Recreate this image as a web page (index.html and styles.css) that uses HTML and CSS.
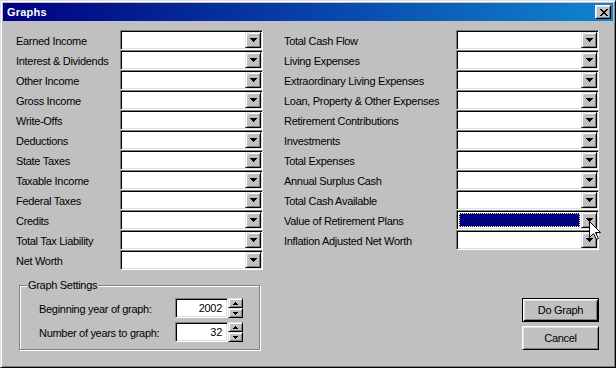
FILE: index.html
```html
<!DOCTYPE html>
<html>
<head>
<meta charset="utf-8">
<title>Graphs</title>
<link rel="stylesheet" href="styles.css">
</head>
<body>
<div class="window">
  <div class="titlebar">
    <span class="title">Graphs</span>
    <div class="close"><svg width="8" height="7" viewBox="0 0 8 7"><path d="M0 0h2v1h-2z M6 0h2v1h-2z M1 1h2v1h-2z M5 1h2v1h-2z M2 2h4v1h-4z M3 3h2v1h-2z M2 4h4v1h-4z M1 5h2v1h-2z M5 5h2v1h-2z M0 6h2v1h-2z M6 6h2v1h-2z" fill="#000"/></svg></div>
  </div>
  <div class="content">
    <div class="columns">
      <div class="col col-left">
        <div class="row"><span class="label">Earned Income</span><div class="combo"><div class="field"></div><div class="drop"><svg width="7" height="4" viewBox="0 0 7 4"><path d="M0 0h7v1h-1v1h-1v1h-1v1h-1v-1h-1v-1h-1v-1h-1z"/></svg></div></div></div>
        <div class="row"><span class="label">Interest &amp; Dividends</span><div class="combo"><div class="field"></div><div class="drop"><svg width="7" height="4" viewBox="0 0 7 4"><path d="M0 0h7v1h-1v1h-1v1h-1v1h-1v-1h-1v-1h-1v-1h-1z"/></svg></div></div></div>
        <div class="row"><span class="label">Other Income</span><div class="combo"><div class="field"></div><div class="drop"><svg width="7" height="4" viewBox="0 0 7 4"><path d="M0 0h7v1h-1v1h-1v1h-1v1h-1v-1h-1v-1h-1v-1h-1z"/></svg></div></div></div>
        <div class="row"><span class="label">Gross Income</span><div class="combo"><div class="field"></div><div class="drop"><svg width="7" height="4" viewBox="0 0 7 4"><path d="M0 0h7v1h-1v1h-1v1h-1v1h-1v-1h-1v-1h-1v-1h-1z"/></svg></div></div></div>
        <div class="row"><span class="label">Write-Offs</span><div class="combo"><div class="field"></div><div class="drop"><svg width="7" height="4" viewBox="0 0 7 4"><path d="M0 0h7v1h-1v1h-1v1h-1v1h-1v-1h-1v-1h-1v-1h-1z"/></svg></div></div></div>
        <div class="row"><span class="label">Deductions</span><div class="combo"><div class="field"></div><div class="drop"><svg width="7" height="4" viewBox="0 0 7 4"><path d="M0 0h7v1h-1v1h-1v1h-1v1h-1v-1h-1v-1h-1v-1h-1z"/></svg></div></div></div>
        <div class="row"><span class="label">State Taxes</span><div class="combo"><div class="field"></div><div class="drop"><svg width="7" height="4" viewBox="0 0 7 4"><path d="M0 0h7v1h-1v1h-1v1h-1v1h-1v-1h-1v-1h-1v-1h-1z"/></svg></div></div></div>
        <div class="row"><span class="label">Taxable Income</span><div class="combo"><div class="field"></div><div class="drop"><svg width="7" height="4" viewBox="0 0 7 4"><path d="M0 0h7v1h-1v1h-1v1h-1v1h-1v-1h-1v-1h-1v-1h-1z"/></svg></div></div></div>
        <div class="row"><span class="label">Federal Taxes</span><div class="combo"><div class="field"></div><div class="drop"><svg width="7" height="4" viewBox="0 0 7 4"><path d="M0 0h7v1h-1v1h-1v1h-1v1h-1v-1h-1v-1h-1v-1h-1z"/></svg></div></div></div>
        <div class="row"><span class="label">Credits</span><div class="combo"><div class="field"></div><div class="drop"><svg width="7" height="4" viewBox="0 0 7 4"><path d="M0 0h7v1h-1v1h-1v1h-1v1h-1v-1h-1v-1h-1v-1h-1z"/></svg></div></div></div>
        <div class="row"><span class="label">Total Tax Liability</span><div class="combo"><div class="field"></div><div class="drop"><svg width="7" height="4" viewBox="0 0 7 4"><path d="M0 0h7v1h-1v1h-1v1h-1v1h-1v-1h-1v-1h-1v-1h-1z"/></svg></div></div></div>
        <div class="row"><span class="label">Net Worth</span><div class="combo"><div class="field"></div><div class="drop"><svg width="7" height="4" viewBox="0 0 7 4"><path d="M0 0h7v1h-1v1h-1v1h-1v1h-1v-1h-1v-1h-1v-1h-1z"/></svg></div></div></div>
      </div>
      <div class="col col-right">
        <div class="row"><span class="label">Total Cash Flow</span><div class="combo"><div class="field"></div><div class="drop"><svg width="7" height="4" viewBox="0 0 7 4"><path d="M0 0h7v1h-1v1h-1v1h-1v1h-1v-1h-1v-1h-1v-1h-1z"/></svg></div></div></div>
        <div class="row"><span class="label">Living Expenses</span><div class="combo"><div class="field"></div><div class="drop"><svg width="7" height="4" viewBox="0 0 7 4"><path d="M0 0h7v1h-1v1h-1v1h-1v1h-1v-1h-1v-1h-1v-1h-1z"/></svg></div></div></div>
        <div class="row"><span class="label">Extraordinary Living Expenses</span><div class="combo"><div class="field"></div><div class="drop"><svg width="7" height="4" viewBox="0 0 7 4"><path d="M0 0h7v1h-1v1h-1v1h-1v1h-1v-1h-1v-1h-1v-1h-1z"/></svg></div></div></div>
        <div class="row"><span class="label">Loan, Property &amp; Other Expenses</span><div class="combo"><div class="field"></div><div class="drop"><svg width="7" height="4" viewBox="0 0 7 4"><path d="M0 0h7v1h-1v1h-1v1h-1v1h-1v-1h-1v-1h-1v-1h-1z"/></svg></div></div></div>
        <div class="row"><span class="label">Retirement Contributions</span><div class="combo"><div class="field"></div><div class="drop"><svg width="7" height="4" viewBox="0 0 7 4"><path d="M0 0h7v1h-1v1h-1v1h-1v1h-1v-1h-1v-1h-1v-1h-1z"/></svg></div></div></div>
        <div class="row"><span class="label">Investments</span><div class="combo"><div class="field"></div><div class="drop"><svg width="7" height="4" viewBox="0 0 7 4"><path d="M0 0h7v1h-1v1h-1v1h-1v1h-1v-1h-1v-1h-1v-1h-1z"/></svg></div></div></div>
        <div class="row"><span class="label">Total Expenses</span><div class="combo"><div class="field"></div><div class="drop"><svg width="7" height="4" viewBox="0 0 7 4"><path d="M0 0h7v1h-1v1h-1v1h-1v1h-1v-1h-1v-1h-1v-1h-1z"/></svg></div></div></div>
        <div class="row"><span class="label">Annual Surplus Cash</span><div class="combo"><div class="field"></div><div class="drop"><svg width="7" height="4" viewBox="0 0 7 4"><path d="M0 0h7v1h-1v1h-1v1h-1v1h-1v-1h-1v-1h-1v-1h-1z"/></svg></div></div></div>
        <div class="row"><span class="label">Total Cash Available</span><div class="combo"><div class="field"></div><div class="drop"><svg width="7" height="4" viewBox="0 0 7 4"><path d="M0 0h7v1h-1v1h-1v1h-1v1h-1v-1h-1v-1h-1v-1h-1z"/></svg></div></div></div>
        <div class="row"><span class="label">Value of Retirement Plans</span><div class="combo"><div class="field selected"></div><div class="drop"><svg width="7" height="4" viewBox="0 0 7 4"><path d="M0 0h7v1h-1v1h-1v1h-1v1h-1v-1h-1v-1h-1v-1h-1z"/></svg></div></div></div>
        <div class="row"><span class="label">Inflation Adjusted Net Worth</span><div class="combo"><div class="field"></div><div class="drop"><svg width="7" height="4" viewBox="0 0 7 4"><path d="M0 0h7v1h-1v1h-1v1h-1v1h-1v-1h-1v-1h-1v-1h-1z"/></svg></div></div></div>
      </div>
    </div>
    <div class="bottom">
      <div class="group">
        <span class="group-label">Graph Settings</span>
        <div class="spin-row">
          <span class="spin-label">Beginning year of graph:</span>
          <div class="spin-field">2002</div>
          <div class="spin">
            <div class="spin-btn"><svg width="5" height="3" viewBox="0 0 5 3"><path d="M2 0h1v1h1v1h1v1h-5v-1h1v-1h1z"/></svg></div>
            <div class="spin-btn"><svg width="5" height="3" viewBox="0 0 5 3"><path d="M0 0h5v1h-1v1h-1v1h-1v-1h-1v-1h-1z"/></svg></div>
          </div>
        </div>
        <div class="spin-row">
          <span class="spin-label">Number of years to graph:</span>
          <div class="spin-field">32</div>
          <div class="spin">
            <div class="spin-btn"><svg width="5" height="3" viewBox="0 0 5 3"><path d="M2 0h1v1h1v1h1v1h-5v-1h1v-1h1z"/></svg></div>
            <div class="spin-btn"><svg width="5" height="3" viewBox="0 0 5 3"><path d="M0 0h5v1h-1v1h-1v1h-1v-1h-1v-1h-1z"/></svg></div>
          </div>
        </div>
      </div>
      <div class="buttons">
        <div class="btn btn-default">Do Graph</div>
        <div class="btn">Cancel</div>
      </div>
    </div>
  </div>
  <svg class="cursor" width="13" height="20" viewBox="0 0 13 20"><path d="M0.5 0.5V16.5L4.5 12.5L7.5 18.5L9.5 17.5L6.5 11.5H11.5Z" fill="#fff" stroke="#000" stroke-width="1" stroke-linejoin="miter"/></svg>
</div>
</body>
</html>
```
FILE: styles.css
```css
html, body {
  margin: 0;
  padding: 0;
  background: #c0c0c0;
}

body {
  font-family: "Liberation Sans", Arial, sans-serif;
  font-size: 11px;
  letter-spacing: -0.3px;
  color: #000;
}

.window {
  position: relative;
  width: 616px;
  height: 368px;
  box-sizing: border-box;
  background: #c0c0c0;
  border: 1px solid;
  border-color: #dfdfdf #000 #000 #dfdfdf;
  box-shadow: inset 1px 1px 0 #fff, inset -1px -1px 0 #808080;
  padding: 2px;
  overflow: hidden;
}

.titlebar {
  height: 18px;
  background: linear-gradient(to right, #000080, #1084d0);
  display: flex;
  align-items: center;
  justify-content: space-between;
  padding: 0 2px 0 4px;
}

.title {
  color: #fff;
  font-weight: bold;
  font-size: 11px;
  letter-spacing: 0.2px;
}

.close {
  width: 16px;
  height: 14px;
  box-sizing: border-box;
  background: #c0c0c0;
  border: 1px solid;
  border-color: #fff #000 #000 #fff;
  box-shadow: inset 1px 1px 0 #dfdfdf, inset -1px -1px 0 #808080;
  display: flex;
  align-items: center;
  justify-content: center;
  padding-left: 1px;
}

.close svg {
  display: block;
}

.content {
  padding: 9px 14px 0 13px;
}

.columns {
  display: flex;
  gap: 21px;
}

.col {
  display: flex;
  flex-direction: column;
}

.row {
  display: flex;
  align-items: center;
  height: 20px;
}

.col-left .label {
  width: 104px;
}

.col-right .label {
  width: 172px;
}

.label {
  white-space: nowrap;
  padding-top: 2px;
}

.combo {
  width: 143px;
  height: 20px;
  box-sizing: border-box;
  border: 1px solid;
  border-color: #808080 #fff #fff #808080;
  box-shadow: inset 1px 1px 0 #000, inset -1px -1px 0 #dfdfdf;
  padding: 1px;
  display: flex;
  background: #fff;
}

.field {
  flex: 1;
  background: #fff;
}

.field.selected {
  margin: 1px;
  background: #000080;
  border: 1px dotted #ffff90;
}

.drop {
  width: 16px;
  height: 16px;
  box-sizing: border-box;
  background: #c0c0c0;
  border: 1px solid;
  border-color: #dfdfdf #000 #000 #dfdfdf;
  box-shadow: inset 1px 1px 0 #fff, inset -1px -1px 0 #808080;
  display: flex;
  align-items: center;
  justify-content: center;
}

.drop svg {
  display: block;
}

.bottom {
  display: flex;
  justify-content: space-between;
  align-items: flex-start;
  margin-top: 15px;
}

.group {
  position: relative;
  margin-left: 3px;
  width: 241px;
  box-sizing: border-box;
  border: 1px solid #808080;
  box-shadow: inset 1px 1px 0 #fff, 1px 1px 0 #fff;
  padding: 12px 0 7px 19px;
  display: flex;
  flex-direction: column;
  gap: 4px;
}

.group-label {
  position: absolute;
  top: -7px;
  left: 7px;
  padding: 0 1px;
  background: #c0c0c0;
  line-height: 13px;
}

.spin-row {
  display: flex;
  align-items: center;
  height: 20px;
}

.spin-label {
  width: 136px;
  white-space: nowrap;
  padding-top: 2px;
}

.spin-field {
  width: 53px;
  height: 20px;
  box-sizing: border-box;
  border: 1px solid;
  border-color: #808080 #fff #fff #808080;
  box-shadow: inset 1px 1px 0 #000, inset -1px -1px 0 #dfdfdf;
  background: #fff;
  text-align: right;
  padding: 1px 5px 0 0;
  line-height: 17px;
}

.spin {
  display: flex;
  flex-direction: column;
  width: 15px;
  height: 20px;
}

.spin-btn {
  height: 10px;
  box-sizing: border-box;
  background: #c0c0c0;
  border: 1px solid;
  border-color: #dfdfdf #000 #000 #dfdfdf;
  box-shadow: inset 1px 1px 0 #fff, inset -1px -1px 0 #808080;
  display: flex;
  align-items: center;
  justify-content: center;
}

.spin-btn svg {
  display: block;
}

.buttons {
  display: flex;
  flex-direction: column;
  gap: 4px;
  margin-top: 13px;
}

.btn {
  width: 77px;
  height: 24px;
  box-sizing: border-box;
  background: #c0c0c0;
  border: 1px solid;
  border-color: #fff #000 #000 #fff;
  box-shadow: inset 1px 1px 0 #dfdfdf, inset -1px -1px 0 #808080;
  display: flex;
  align-items: center;
  justify-content: center;
}

.btn-default {
  border-color: #000;
  box-shadow: inset 1px 1px 0 #fff, inset -1px -1px 0 #000, inset 2px 2px 0 #dfdfdf, inset -2px -2px 0 #808080;
}

.cursor {
  position: absolute;
  left: 588px;
  top: 220px;
}
```
